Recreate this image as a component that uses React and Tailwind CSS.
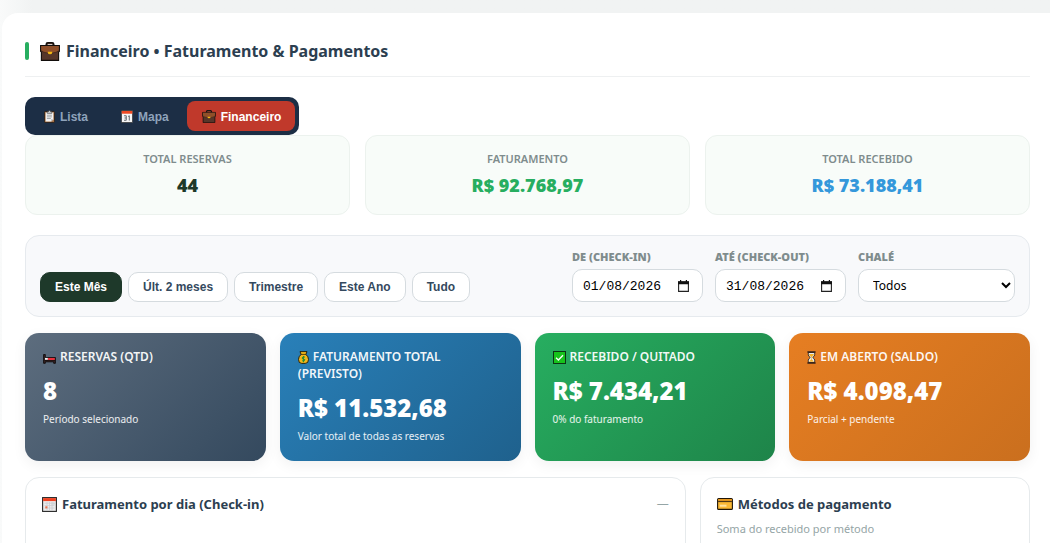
import React from "react";

function Briefcase({ className }) {
  return (
    <svg viewBox="0 0 20 19" className={className} aria-hidden="true">
      <path d="M6.5 4V2.2Q6.5 1 7.8 1h4.4q1.300 0 1.300 1.200V4" fill="none" stroke="#15100e" strokeWidth="2" />
      <path d="M7.300 3.500V2.500q0-.6.6-.6h4.200q.6 0 .6.6v1" fill="none" stroke="#6b4a3c" strokeWidth=".7" />
      <path d="M.6 3.500h18.800v5.700l-.8 1V18.400H1.400v-8.200l-.8-1z" fill="#56362a" stroke="#120d0b" strokeWidth="1.100" />
      <path d="M1.200 4.100h17.600v4.600q-2.400 2-5.800 2.200H7Q3.600 10.700 1.200 8.700z" fill="#8f4f29" />
      <path d="M1.200 8.700q2.400 2 5.800 2.200h6q3.400-.2 5.800-2.200" fill="none" stroke="#3a2219" strokeWidth=".7" />
      <path d="M7.800 9.700h4.400v1q-.2 1.500-2.200 1.500t-2.200-1.500z" fill="#f5b914" />
    </svg>
  );
}

function Clipboard({ className }) {
  return (
    <svg viewBox="0 0 12 14" className={className} aria-hidden="true">
      <rect x=".5" y="1.500" width="11" height="12" rx=".8" fill="#a6744b" stroke="#20160f" strokeWidth=".8" />
      <path d="M1.800 2.600h8.400v7.400l-2.400 2.400h-6z" fill="#f2f2f2" />
      <path d="M3.500 3.600V1.800h1.300Q5 .5 6 .5t1.200 1.300h1.300v1.800z" fill="#c9ced3" stroke="#3b3b3b" strokeWidth=".6" />
      <path d="M3.200 5.600h5.400M3.200 7.400h5.400M3.200 9.200h4.200" stroke="#8f9499" strokeWidth=".9" />
      <path d="M10.200 10L7.800 12.400V10z" fill="#b9bdc2" />
    </svg>
  );
}

function CalendarDay({ className }) {
  return (
    <svg viewBox="0 0 13 14" className={className} aria-hidden="true">
      <rect x=".5" y=".7" width="12" height="12.800" fill="#f6f6f6" stroke="#2a2a2a" strokeWidth=".7" />
      <path d="M.8 1h11.400v3H.8z" fill="#f04a24" />
      <path d="M3.300 6.200h2.400v4.900H3.300M3.800 8.600h1.900M7.700 7l1.300-.8v5.200" fill="none" stroke="#5a5f66" strokeWidth="1" />
    </svg>
  );
}

function CalendarGrid({ className }) {
  return (
    <svg viewBox="0 0 15 15" className={className} aria-hidden="true">
      <rect x=".6" y=".6" width="13.800" height="13.800" fill="#ececec" stroke="#252525" strokeWidth="1.100" />
      <path d="M1.100 1.100h12.800v3H1.100z" fill="#f0401f" />
      <path d="M2.500 6.200h10M2.500 8.600h10M2.500 11h10M5 5v8.300M7.500 5v8.300M10 5v8.300" stroke="#c9ccd0" strokeWidth=".8" />
      <path d="M3.300 9.300h2.100v2.100H3.300z" fill="#f0734f" />
      <path d="M9.500 5.500h3.300v2.100H9.500z" fill="#cfd2d6" />
    </svg>
  );
}

function Bed({ className }) {
  return (
    <svg viewBox="0 0 13 12" className={className} aria-hidden="true">
      <path d="M.6 2.500h1.700v3h10.100v5.800h-1.700V9.800H2.300v1.500H.6z" fill="#3b2323" stroke="#100c0c" strokeWidth=".9" />
      <path d="M4.800 5.900h7v2.400h-7z" fill="#e7323d" />
      <path d="M2 5.900h2.800v1.900H2z" fill="#f1f1f1" />
      <path d="M1.500 8.500h10.500" stroke="#120d0d" strokeWidth=".8" />
    </svg>
  );
}

function MoneyBag({ className }) {
  return (
    <svg viewBox="0 0 11 13" className={className} aria-hidden="true">
      <path d="M2 .6h7L7.900 3.400Q10.500 5.500 10.500 8.500q0 3.900-3.200 3.900H3.700Q.5 12.400.5 8.500.5 5.500 3.100 3.400z" fill="#f2b81b" stroke="#1a1608" strokeWidth=".9" />
      <path d="M2.900 3.400h5.200" stroke="#473307" strokeWidth=".9" />
      <path d="M7 6.100Q4.100 5.300 4.100 7t2.800 1.500q.2 2-2.800 1.300M5.500 5v6.200" fill="none" stroke="#2d8b32" strokeWidth="1" />
    </svg>
  );
}

function CheckBoxMark({ className }) {
  return (
    <svg viewBox="0 0 13 13" className={className} aria-hidden="true">
      <rect x=".5" y=".5" width="12" height="12" fill="#17c31b" stroke="#0b3514" />
      <path d="M3 6.700l2.400 2.300L10 4.200" fill="none" stroke="#fff" strokeWidth="1.300" />
    </svg>
  );
}

function Hourglass({ className }) {
  return (
    <svg viewBox="0 0 9 13" className={className} aria-hidden="true">
      <path d="M1.300 1.500v2.300q0 1.300 2 2.700-2 1.400-2 2.700v2.300h6.400V9.200q0-1.300-2-2.700 2-1.400 2-2.700V1.500z" fill="#e8edf0" stroke="#20150f" strokeWidth=".8" />
      <path d="M2 3h5q0 1.400-2.200 2.900v2.300l2.200 2.600H2l2.200-2.600V5.900Q2 4.400 2 3z" fill="#f5b22b" />
      <path d="M.4 1.100h8.200M.4 11.900h8.200" stroke="#33201a" strokeWidth="1.500" />
    </svg>
  );
}

function CreditCard({ className }) {
  return (
    <svg viewBox="0 0 16 12" className={className} aria-hidden="true">
      <rect x=".6" y=".6" width="14.800" height="10.800" rx="1" fill="#fbb934" stroke="#1f1508" strokeWidth="1.100" />
      <path d="M1.100 2.600h13.800v1.500H1.100z" fill="#4a3518" />
      <path d="M1.100 1.200h13.800v1.400H1.100z" fill="#f39c1c" />
      <path d="M2.800 6.700h6.700v2H2.800z" fill="#ffe2a1" />
    </svg>
  );
}

function CalendarPicker() {
  return (
    <svg viewBox="0 0 11 12" className="h-3 w-[11px]" aria-hidden="true">
      <path d="M.6 2h9.800v9.400H.6z" fill="none" stroke="#222" strokeWidth="1.100" />
      <path d="M0 1.200h11v3H0zM2 0h1.200v2H2zM7.800 0H9v2H7.800z" fill="#111" />
    </svg>
  );
}

const tabs = [
  { label: "Lista", Icon: Clipboard, size: "h-[13px] w-[11px]", style: "pr-4 pl-[15px] text-[#8fa3bb]" },
  { label: "Mapa", Icon: CalendarDay, size: "h-[13px] w-3", style: "pr-4 pl-[15px] text-[#8fa3bb]" },
  { label: "Financeiro", Icon: Briefcase, size: "h-[13px] w-[14px]", style: "bg-[#c0392b] pr-[14px] pl-[15px] text-white" },
];

const totals = [
  { label: "TOTAL RESERVAS", value: "44", color: "text-[#1e392a]" },
  { label: "FATURAMENTO", value: "R$ 92.768,97", color: "text-[#27ae60]" },
  { label: "TOTAL RECEBIDO", value: "R$ 73.188,41", color: "text-[#3498db]" },
];

const periods = ["Este Mês", "Últ. 2 meses", "Trimestre", "Este Ano", "Tudo"];

const kpis = [
  { label: "RESERVAS (QTD)", value: "8", note: "Período selecionado", Icon: Bed, size: "h-3 w-[13px]", bg: "from-[#5d6d7e] to-[#34495e]" },
  { label: "FATURAMENTO TOTAL (PREVISTO)", value: "R$ 11.532,68", note: "Valor total de todas as reservas", Icon: MoneyBag, size: "h-[13px] w-[11px]", bg: "from-[#2980b9] to-[#1f618d]" },
  { label: "RECEBIDO / QUITADO", value: "R$ 7.434,21", note: "0% do faturamento", Icon: CheckBoxMark, size: "h-[13px] w-[13px]", bg: "from-[#27ae60] to-[#1e8449]" },
  { label: "EM ABERTO (SALDO)", value: "R$ 4.098,47", note: "Parcial + pendente", Icon: Hourglass, size: "h-[13px] w-[9px]", bg: "from-[#e67e22] to-[#ca6f1e]" },
];

function DateField({ id, label, value }) {
  return (
    <div className="flex flex-col gap-1">
      <label htmlFor={id} className="text-[11px] leading-4 font-black text-[#7f8c8d]">{label}</label>
      <div className="flex h-[33px] w-[131px] items-center justify-between rounded-[10px] border border-[#d5dbdf] bg-white pr-[13px] pl-[10px]">
        <input id={id} type="text" defaultValue={value} className="h-full w-[84px] bg-transparent pt-px font-['Liberation_Mono',monospace] text-[13px] text-black outline-none" />
        <button type="button" aria-label="Abrir calendário" className="flex"><CalendarPicker /></button>
      </div>
    </div>
  );
}

export default function App() {
  return (
    <div className="h-screen overflow-hidden bg-linear-to-r from-[#f9fafa] to-[#f1f3f3] to-[32px] pt-[13px] pl-[2px] font-['Noto_Sans','Open_Sans',sans-serif]">
      <main className="min-h-full rounded-tl-2xl bg-white pt-6 pr-5 pl-[23px]">
        <header className="flex h-10 items-start border-b border-[#eef0f1]">
          <h1 className="flex h-7 items-center gap-[6px] text-base font-bold text-[#2c3e50]">
            <span className="mr-[5px] h-[18px] w-1 rounded-xs bg-[#27ae60]" />
            <Briefcase className="h-[19px] w-5" />
            Financeiro • Faturamento &amp; Pagamentos
          </h1>
        </header>

        <nav className="mt-5 flex h-[38px] w-fit gap-[2px] rounded-[10px] bg-[#1c2e45] p-1 font-['Liberation_Sans',sans-serif] text-xs font-bold">
          {tabs.map(({ label, Icon, size, style }) => (
            <button key={label} type="button" className={`flex items-center gap-[5px] rounded-lg pt-px ${style}`}>
              <Icon className={size} />
              {label}
            </button>
          ))}
        </nav>

        <section className="grid grid-cols-3 gap-[15px]">
          {totals.map((t) => (
            <div key={t.label} className="flex h-20 flex-col items-center rounded-xl border border-[#ecf2ee] bg-[#f8fcf9] pt-[15px] text-center">
              <p className="text-[11px] leading-4 font-semibold text-[#7f8c8d]">{t.label}</p>
              <p className={`mt-1 text-lg leading-7 font-black ${t.color}`}>{t.value}</p>
            </div>
          ))}
        </section>

        <section className="mt-5 flex items-end justify-between rounded-[14px] border border-[#e6eaee] bg-[#f8f9fb] p-[14px] pt-[13px]">
          <div className="flex gap-[6px] font-['Liberation_Sans',sans-serif] text-xs font-bold">
            {periods.map((p, i) => (
              <button
                key={p}
                type="button"
                className={`h-[30px] rounded-[10px] border px-[14px] ${i === 0 ? "border-[#1e392a] bg-[#1e392a] text-white" : "border-[#d5dbdf] bg-white text-[#34495e]"}`}
              >
                {p}
              </button>
            ))}
          </div>
          <div className="flex gap-3">
            <DateField id="de" label="DE (CHECK-IN)" value="01/08/2026" />
            <DateField id="ate" label="ATÉ (CHECK-OUT)" value="31/08/2026" />
            <div className="flex flex-col gap-1">
              <label htmlFor="chale" className="text-[11px] leading-4 font-black text-[#7f8c8d]">CHALÉ</label>
              <select id="chale" className="h-[33px] w-[157px] rounded-[10px] border border-[#d5dbdf] bg-white pl-[10px] text-xs text-black">
                <option>Todos</option>
              </select>
            </div>
          </div>
        </section>

        <section className="mt-4 grid grid-cols-4 gap-[14px]">
          {kpis.map(({ label, value, note, Icon, size, bg }) => (
            <article key={label} className={`h-32 rounded-[14px] bg-linear-135 px-[18px] pt-[15px] text-white shadow-[0_4px_14px_rgba(0,0,0,0.06)] ${bg}`}>
              <h2 className="w-40 text-xs leading-[17px] font-semibold text-white/95">
                <Icon className={`mr-1 inline-block align-[-3px] ${size}`} />
                {label}
              </h2>
              <p className="mt-[10px] text-2xl leading-8 font-black">{value}</p>
              <p className="mt-1 text-[10px] leading-4 text-white/90">{note}</p>
            </article>
          ))}
        </section>

        <section className="mt-4 grid grid-cols-[2fr_1fr] gap-[14px]">
          <article className="flex h-60 items-start justify-between rounded-[14px] border border-[#e6eaec] bg-white px-4 pt-4">
            <h2 className="flex items-center gap-[5px] text-[13px] leading-5 font-bold text-[#2c3e50]">
              <CalendarGrid className="h-[15px] w-[15px]" />
              Faturamento por dia (Check-in)
            </h2>
            <span className="text-xs leading-5 text-[#95a5a6]">—</span>
          </article>
          <article className="h-60 rounded-[14px] border border-[#e6eaec] bg-white px-4 pt-4">
            <h2 className="flex items-center gap-[5px] text-[13px] leading-5 font-bold text-[#2c3e50]">
              <CreditCard className="h-3 w-4" />
              Métodos de pagamento
            </h2>
            <p className="mt-[7px] text-[11px] leading-4 text-[#95a5a6]">Soma do recebido por método</p>
          </article>
        </section>
      </main>
    </div>
  );
}
